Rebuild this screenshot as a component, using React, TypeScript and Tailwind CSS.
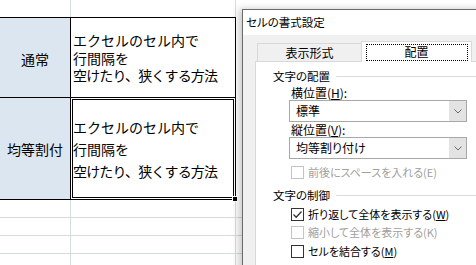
import React from "react";

function Checkbox({ checked, disabled, children }: { checked?: boolean; disabled?: boolean; children: React.ReactNode }) {
  return (
    <div className="flex h-[16px] items-center gap-[4px] pl-[35px]">
      <div
        className={
          disabled
            ? "flex h-[13px] w-[13px] items-center justify-center border border-[#c4c4c4] bg-white"
            : "flex h-[13px] w-[13px] items-center justify-center border border-[#333333] bg-white"
        }
      >
        {checked && (
          <svg width="11" height="11" viewBox="0 0 11 11">
            <polyline points="1.5,5.5 4.2,8.2 9.5,2.5" fill="none" stroke="#333333" strokeWidth="1.3" />
          </svg>
        )}
      </div>
      <div className={disabled ? "text-[11px] leading-[16px] text-[#a0a0a0]" : "text-[11px] leading-[16px] text-black"}>
        {children}
      </div>
    </div>
  );
}

function Dropdown({ value }: { value: string }) {
  return (
    <div className="ml-[33px] flex h-[22px] w-[178px] border border-[#a8a8a8] bg-white">
      <div className="flex flex-1 items-center pl-[6px]">{value}</div>
      <div className="flex w-[17px] items-center justify-center bg-[#e3e3e3]">
        <svg width="8" height="5" viewBox="0 0 8 5">
          <polyline points="0.5,0.5 4,4 7.5,0.5" fill="none" stroke="#6a6a6a" strokeWidth="1" />
        </svg>
      </div>
    </div>
  );
}

function GroupHeader({ label }: { label: string }) {
  return (
    <div className="flex h-[16px] items-center pl-[17px]">
      <span className="text-[11.5px] leading-[16px]">{label}</span>
      <div className="ml-[6px] h-px flex-1 bg-[#dcdcdc]" />
    </div>
  );
}

export default function App() {
  const gridRow = (k: number) => (
    <div key={k} className="flex h-[18px] shrink-0">
      <div className="w-[71px] border-b border-r border-[#d5dae3]" />
      <div className="w-[165px] border-b border-r border-[#d5dae3]" />
      <div className="flex-1 border-b border-[#d5dae3]" />
    </div>
  );

  return (
    <div className="relative h-[265px] w-[476px] overflow-hidden bg-white font-['Noto_Sans_CJK_JP',sans-serif] text-black">
      {/* Spreadsheet */}
      <div className="flex flex-col text-[14px] leading-none">
        <div className="flex h-[17px] shrink-0">
          <div className="w-[71px] border-r border-[#d5dae3]" />
          <div className="w-[165px] border-r border-[#d5dae3]" />
          <div className="flex-1" />
        </div>
        <div className="flex h-[80px] shrink-0">
          <div className="flex w-[70px] justify-center border-t border-black bg-[#dce6f1] pt-[33px] leading-[17px]">
            通常
          </div>
          <div className="w-[166px] border-x border-t border-black pl-[2px] pt-[14px] leading-[17.5px]">
            <div>エクセルのセル内で</div>
            <div>行間隔を</div>
            <div className="tracking-[-0.85px]">空けたり、狭くする方法</div>
          </div>
        </div>
        <div className="flex h-[103px] shrink-0">
          <div className="flex w-[70px] items-center justify-center border-y border-black bg-[#dce6f1]">均等割付</div>
          <div className="relative w-[166px] border-[3px] border-double border-black pt-[16px] leading-[22px]">
            <div>エクセルのセル内で</div>
            <div>行間隔を</div>
            <div className="tracking-[-0.85px]">空けたり、狭くする方法</div>
            <div className="absolute -bottom-[5px] -right-[5px] h-[6px] w-[6px] border border-white bg-black" />
          </div>
        </div>
        {[0, 1, 2, 3].map(gridRow)}
      </div>

      {/* Format Cells dialog */}
      <div className="absolute left-[242px] top-[9px] flex h-[270px] w-[260px] flex-col border border-[#6b6b6b] bg-[#f0f0f0] text-[12px] shadow-[-3px_0_7px_rgba(0,0,0,0.22)] [font-feature-settings:'palt']">
        <div className="flex h-[25px] shrink-0 items-center bg-white pl-[3px] text-[11.5px]">セルの書式設定</div>
        <div className="flex flex-1 flex-col pl-[12px] pt-[6px]">
          <div className="ml-[2px] flex h-[20px] shrink-0 items-end">
            <div className="flex h-[18px] w-[104px] items-center justify-center border-l border-t border-[#d9d9d9] bg-[#f0f0f0]">
              表示形式
            </div>
            <div className="relative z-10 -mb-px flex h-[21px] w-[111px] items-center justify-center border-x border-t border-[#d9d9d9] bg-white pb-[1px]">
              配置
              <div className="absolute bottom-[1px] left-[4px] right-[3px] top-[2px] border border-dotted border-black" />
            </div>
          </div>
          <div className="flex flex-1 flex-col border-l border-t border-[#d9d9d9] bg-white pt-[6px]">
            <GroupHeader label="文字の配置" />
            <div className="mt-[1px] h-[15px] pl-[35px] leading-[15px]">
              横位置(<span className="underline">H</span>):
            </div>
            <Dropdown value="標準" />
            <div className="h-[15px] pl-[35px] leading-[15px]">
              縦位置(<span className="underline">V</span>):
            </div>
            <Dropdown value="均等割り付け" />
            <div className="mt-[5px]">
              <Checkbox disabled>前後にスペースを入れる(E)</Checkbox>
            </div>
            <div className="mt-[7px]">
              <GroupHeader label="文字の制御" />
            </div>
            <div className="mt-[3px]">
              <Checkbox checked>
                折り返して全体を表示する(<span className="underline">W</span>)
              </Checkbox>
            </div>
            <div className="mt-[2px]">
              <Checkbox disabled>縮小して全体を表示する(K)</Checkbox>
            </div>
            <div className="mt-[3px]">
              <Checkbox>
                セルを結合する(<span className="underline">M</span>)
              </Checkbox>
            </div>
          </div>
        </div>
      </div>
    </div>
  );
}
